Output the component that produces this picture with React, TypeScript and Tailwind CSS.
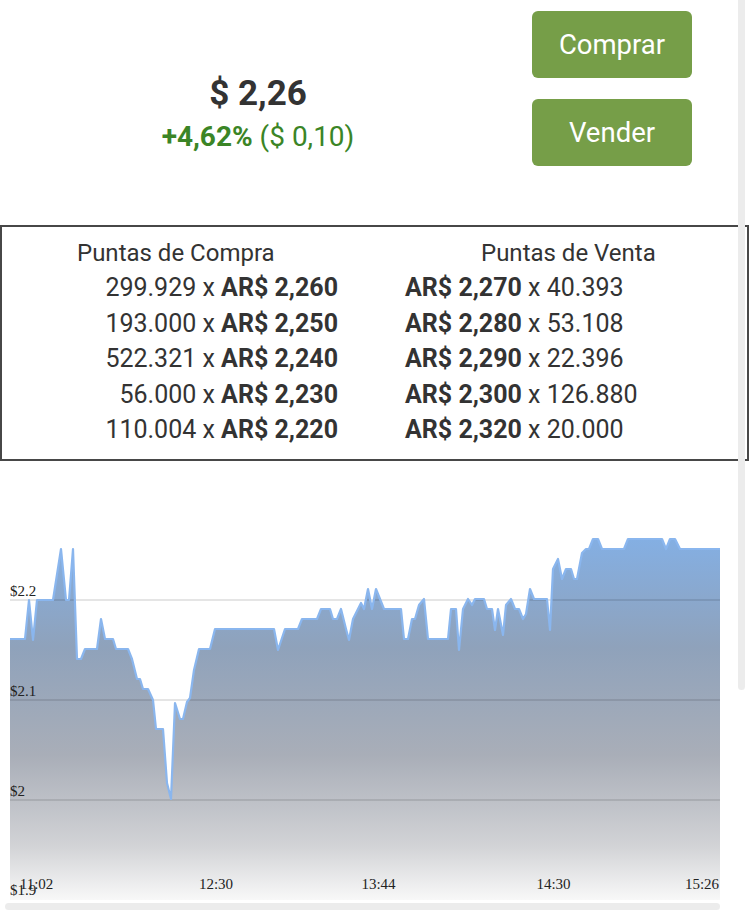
import React from 'react';

const points: [number, number][] = [
  [10, 639], [25, 639], [29, 600], [33, 640], [37, 600], [53, 600], [61, 549], [66, 600], [69, 600],
  [73, 549], [77, 659], [81, 659], [85, 649], [97, 649], [101, 619], [105, 639], [113, 639], [116, 649],
  [128, 649], [132, 659], [137, 679], [140, 679], [143, 689], [148, 689], [153, 700], [156, 729],
  [163, 729], [167, 783], [171, 799], [175, 703], [180, 719], [183, 719], [187, 702], [190, 698],
  [194, 670], [199, 649], [210, 649], [215, 629], [274, 629], [278, 650], [285, 629], [298, 629],
  [302, 619], [317, 619], [321, 609], [330, 609], [333, 619], [337, 619], [341, 609], [346, 629],
  [349, 640], [353, 619], [361, 603], [364, 609], [368, 589], [372, 609], [376, 589], [384, 609],
  [401, 609], [404, 639], [408, 639], [412, 619], [415, 619], [419, 605], [424, 599], [428, 639],
  [448, 639], [451, 609], [456, 609], [459, 650], [463, 609], [468, 599], [472, 605], [475, 599],
  [484, 599], [487, 609], [492, 609], [495, 630], [498, 609], [503, 635], [506, 605], [511, 599],
  [515, 609], [519, 609], [523, 619], [526, 614], [530, 589], [534, 599], [547, 599], [550, 630],
  [553, 569], [558, 559], [562, 579], [566, 569], [571, 569], [574, 579], [577, 579], [582, 553],
  [586, 549], [589, 549], [593, 539], [598, 539], [602, 549], [624, 549], [628, 539], [662, 539],
  [666, 549], [670, 539], [675, 539], [680, 549], [720, 549],
];

const bids = [
  ['299.929', '2,260'],
  ['193.000', '2,250'],
  ['522.321', '2,240'],
  ['56.000', '2,230'],
  ['110.004', '2,220'],
];

const asks = [
  ['2,270', '40.393'],
  ['2,280', '53.108'],
  ['2,290', '22.396'],
  ['2,300', '126.880'],
  ['2,320', '20.000'],
];

const yLabels = [
  { t: '$2.2', y: 596 },
  { t: '$2.1', y: 696 },
  { t: '$2', y: 796 },
  { t: '$1.9', y: 895 },
];

const xLabels = [
  { t: '11:02', x: 36.5 },
  { t: '12:30', x: 216 },
  { t: '13:44', x: 378.5 },
  { t: '14:30', x: 553.5 },
  { t: '15:26', x: 702 },
];

const PriceChart = () => {
  const line = points.map(p => p.join(',')).join(' ');
  const area = `${line} 720,900 10,900`;
  return (
    <svg width="750" height="450" viewBox="0 461 750 450" className="block">
      <defs>
        <linearGradient id="fillGrad" gradientUnits="userSpaceOnUse" x1="0" y1="539" x2="0" y2="900">
          <stop offset="0" stopColor="#84afe3" />
          <stop offset="0.3" stopColor="#8fa2bb" />
          <stop offset="0.6" stopColor="#a9aeb8" />
          <stop offset="0.85" stopColor="#d2d3d6" />
          <stop offset="1" stopColor="#f8f8f8" />
        </linearGradient>
      </defs>
      <polygon points={area} fill="url(#fillGrad)" />
      {[600, 700, 800].map(y => (
        <line key={y} x1="10" x2="720" y1={y} y2={y} stroke="rgba(0,0,0,0.1)" strokeWidth="2" />
      ))}
      <polyline points={line} fill="none" stroke="#8ab6ee" strokeWidth="2.2" strokeLinejoin="round" />
      <g fontFamily="'Liberation Serif', serif" fontSize="15" fill="#222">
        {yLabels.map(l => (
          <text key={l.t} x="10" y={l.y}>{l.t}</text>
        ))}
        {xLabels.map(l => (
          <text key={l.t} x={l.x} y="889" textAnchor="middle">{l.t}</text>
        ))}
      </g>
    </svg>
  );
};

const App = () => {
  return (
    <div className="relative w-[750px] h-[911px] overflow-hidden bg-white font-['Roboto',sans-serif] text-[#333]">
      <div className="flex h-[225px]">
        <div className="w-[516px] flex flex-col items-center pt-[74px]">
          <div className="text-[35px] leading-[40px] font-bold">$ 2,26</div>
          <div className="text-[28px] leading-[34px] text-[#3b8526] mt-[6px]">
            <span className="font-bold">+4,62%</span> ($ 0,10)
          </div>
        </div>
        <div className="ml-[16px] pt-[11px] flex flex-col gap-[21px]">
          <button className="w-[160px] h-[67px] rounded-[6px] bg-[#769e48] text-white text-[27.5px]">Comprar</button>
          <button className="w-[160px] h-[67px] rounded-[6px] bg-[#769e48] text-white text-[27.5px]">Vender</button>
        </div>
      </div>

      <div className="w-[749px] h-[236px] border-2 border-[#474747] grid grid-cols-[372px_373px] pt-[9px]">
        <div>
          <div className="text-[24px] leading-[34px] pl-[75px]">Puntas de Compra</div>
          {bids.map(([qty, price]) => (
            <div key={qty} className="text-[25px] leading-[35.5px] text-right pr-[36px]">
              {qty} x <span className="font-bold">AR$ {price}</span>
            </div>
          ))}
        </div>
        <div>
          <div className="text-[24px] leading-[34px] pl-[107px]">Puntas de Venta</div>
          {asks.map(([price, qty]) => (
            <div key={price} className="text-[25px] leading-[35.5px] pl-[31px]">
              <span className="font-bold">AR$ {price}</span> x {qty}
            </div>
          ))}
        </div>
      </div>

      <PriceChart />

      <div className="absolute right-[5px] top-0 w-[7px] h-[690px] rounded-b-full bg-[#ececec]" />
      <div className="absolute left-[5px] top-[903px] w-[715px] h-[7px] rounded-full bg-[#ececec]" />
    </div>
  );
};

export default App;
